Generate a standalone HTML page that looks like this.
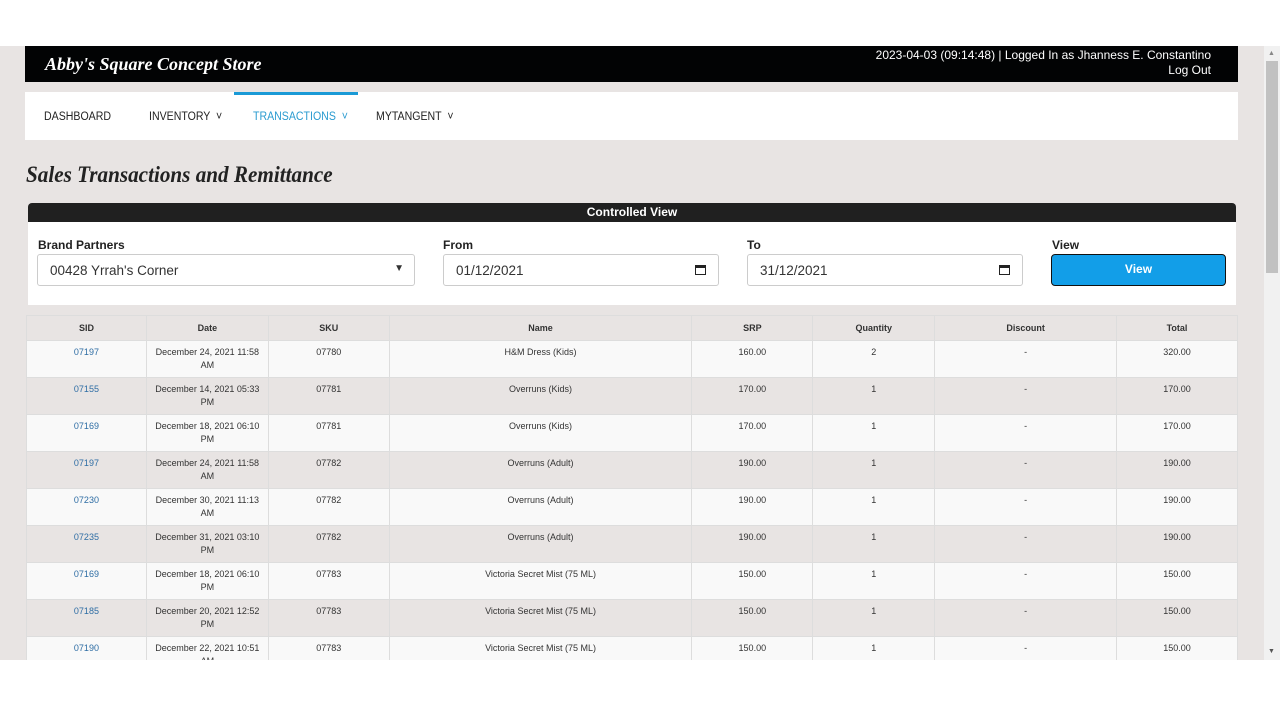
<!DOCTYPE html>
<html><head><meta charset="utf-8"><style>
*{margin:0;padding:0;box-sizing:border-box}
body{width:1280px;height:720px;background:#fff;font-family:"Liberation Sans",sans-serif;position:relative;overflow:hidden}
#page{position:absolute;left:0;top:46px;width:1280px;height:614px;background:#e8e4e3;overflow:hidden}
.abs{position:absolute}
#hdr{left:25px;top:0;width:1213px;height:36px;background:#020304;color:#fff}
#logo{left:20px;top:8px;font-family:"Liberation Serif",serif;font-style:italic;font-weight:bold;font-size:18px}
#info{right:27px;top:2px;text-align:right;font-size:12px;line-height:15px}
#nav{left:25px;top:46px;width:1213px;height:48px;background:#fff;font-size:11.5px;color:#222}
#nav span{position:absolute;top:19px;transform:scaleX(.92);transform-origin:left}
#title{left:26px;top:116px;font-family:"Liberation Serif",serif;font-style:italic;font-weight:bold;font-size:23px;color:#222;transform:scaleX(.92);transform-origin:left}
#ph{left:28px;top:157px;width:1208px;height:19px;background:#202020;border-radius:4px 4px 0 0;color:#fff;font-size:12px;font-weight:bold;text-align:center;line-height:19px}
#pb{left:28px;top:176px;width:1208px;height:83px;background:#fff}
.lbl{position:absolute;top:16px;font-size:12px;font-weight:bold;color:#222}
.inp{position:absolute;top:32px;height:32px;border:1px solid #ccc;border-radius:3px;font-size:13.5px;color:#333;padding:8px 12px}
#btn{left:1023px;top:32px;width:175px;height:32px;background:#129ee8;border:1.5px solid #111;border-radius:4px;color:#fff;font-size:12px;font-weight:bold;text-align:center;line-height:29px}
table{position:absolute;left:26px;top:269px;width:1212px;border-collapse:collapse;font-size:9px;color:#333}
td,th{border:1px solid #ddd;text-align:center;vertical-align:top;padding:5px 6px 0}
th{height:25px;background:#e8e4e3;font-weight:bold;padding-top:7px}
td{height:37px;line-height:13px}
tr.w td{background:#f9f9f9}
tr.g td{background:#e8e4e3}
a{color:#2e6da4;text-decoration:none}
#sb{left:1264px;top:0;width:16px;height:614px;background:#f1f1f1}
#thumb{left:1266px;top:15px;width:12px;height:212px;background:#c1c1c1}
</style></head><body>
<div id="page">
<div id="hdr" class="abs"><div id="logo" class="abs">Abby's Square Concept Store</div>
<div id="info" class="abs">2023-04-03 (09:14:48) | Logged In as Jhanness E. Constantino<br>Log Out</div></div>
<div id="nav" class="abs">
<div class="abs" style="left:209px;top:0;width:124px;height:3px;background:#1a9ad6"></div>
<span style="left:19px">DASHBOARD</span>
<span style="left:124px">INVENTORY &nbsp;˅</span>
<span style="left:228px;color:#2a9bd0">TRANSACTIONS &nbsp;˅</span>
<span style="left:351px">MYTANGENT &nbsp;˅</span>
</div>
<div id="title" class="abs">Sales Transactions and Remittance</div>
<div id="ph" class="abs">Controlled View</div>
<div id="pb" class="abs">
<div class="lbl" style="left:10px">Brand Partners</div>
<div class="inp" style="left:9px;width:378px">00428 Yrrah's Corner<span style="position:absolute;right:10px;top:8px;font-size:10px">▼</span></div>
<div class="lbl" style="left:415px">From</div>
<div class="inp" style="left:415px;width:276px">01/12/2021<span style="position:absolute;right:12px;top:10px;width:11px;height:10px;border:1.5px solid #222;border-top-width:3px"></span></div>
<div class="lbl" style="left:719px">To</div>
<div class="inp" style="left:719px;width:276px">31/12/2021<span style="position:absolute;right:12px;top:10px;width:11px;height:10px;border:1.5px solid #222;border-top-width:3px"></span></div>
<div class="lbl" style="left:1024px">View</div>
<div id="btn" class="abs">View</div>
</div>
<table>
<colgroup><col style="width:120px"><col style="width:122px"><col style="width:121px"><col style="width:303px"><col style="width:121px"><col style="width:122px"><col style="width:182px"><col style="width:121px"></colgroup>
<tr><th>SID</th><th>Date</th><th>SKU</th><th>Name</th><th>SRP</th><th>Quantity</th><th>Discount</th><th>Total</th></tr>
<tr class="w"><td><a>07197</a></td><td>December 24, 2021 11:58 AM</td><td>07780</td><td>H&amp;M Dress (Kids)</td><td>160.00</td><td>2</td><td>-</td><td>320.00</td></tr>
<tr class="g"><td><a>07155</a></td><td>December 14, 2021 05:33 PM</td><td>07781</td><td>Overruns (Kids)</td><td>170.00</td><td>1</td><td>-</td><td>170.00</td></tr>
<tr class="w"><td><a>07169</a></td><td>December 18, 2021 06:10 PM</td><td>07781</td><td>Overruns (Kids)</td><td>170.00</td><td>1</td><td>-</td><td>170.00</td></tr>
<tr class="g"><td><a>07197</a></td><td>December 24, 2021 11:58 AM</td><td>07782</td><td>Overruns (Adult)</td><td>190.00</td><td>1</td><td>-</td><td>190.00</td></tr>
<tr class="w"><td><a>07230</a></td><td>December 30, 2021 11:13 AM</td><td>07782</td><td>Overruns (Adult)</td><td>190.00</td><td>1</td><td>-</td><td>190.00</td></tr>
<tr class="g"><td><a>07235</a></td><td>December 31, 2021 03:10 PM</td><td>07782</td><td>Overruns (Adult)</td><td>190.00</td><td>1</td><td>-</td><td>190.00</td></tr>
<tr class="w"><td><a>07169</a></td><td>December 18, 2021 06:10 PM</td><td>07783</td><td>Victoria Secret Mist (75 ML)</td><td>150.00</td><td>1</td><td>-</td><td>150.00</td></tr>
<tr class="g"><td><a>07185</a></td><td>December 20, 2021 12:52 PM</td><td>07783</td><td>Victoria Secret Mist (75 ML)</td><td>150.00</td><td>1</td><td>-</td><td>150.00</td></tr>
<tr class="w"><td><a>07190</a></td><td>December 22, 2021 10:51 AM</td><td>07783</td><td>Victoria Secret Mist (75 ML)</td><td>150.00</td><td>1</td><td>-</td><td>150.00</td></tr>
</table>
<div id="sb" class="abs"></div><div id="thumb" class="abs"></div>
<div class="abs" style="left:1268px;top:4px;font-size:7px;color:#888">▲</div>
<div class="abs" style="left:1268px;top:602px;font-size:7px;color:#555">▼</div>
</div>
</body></html>
